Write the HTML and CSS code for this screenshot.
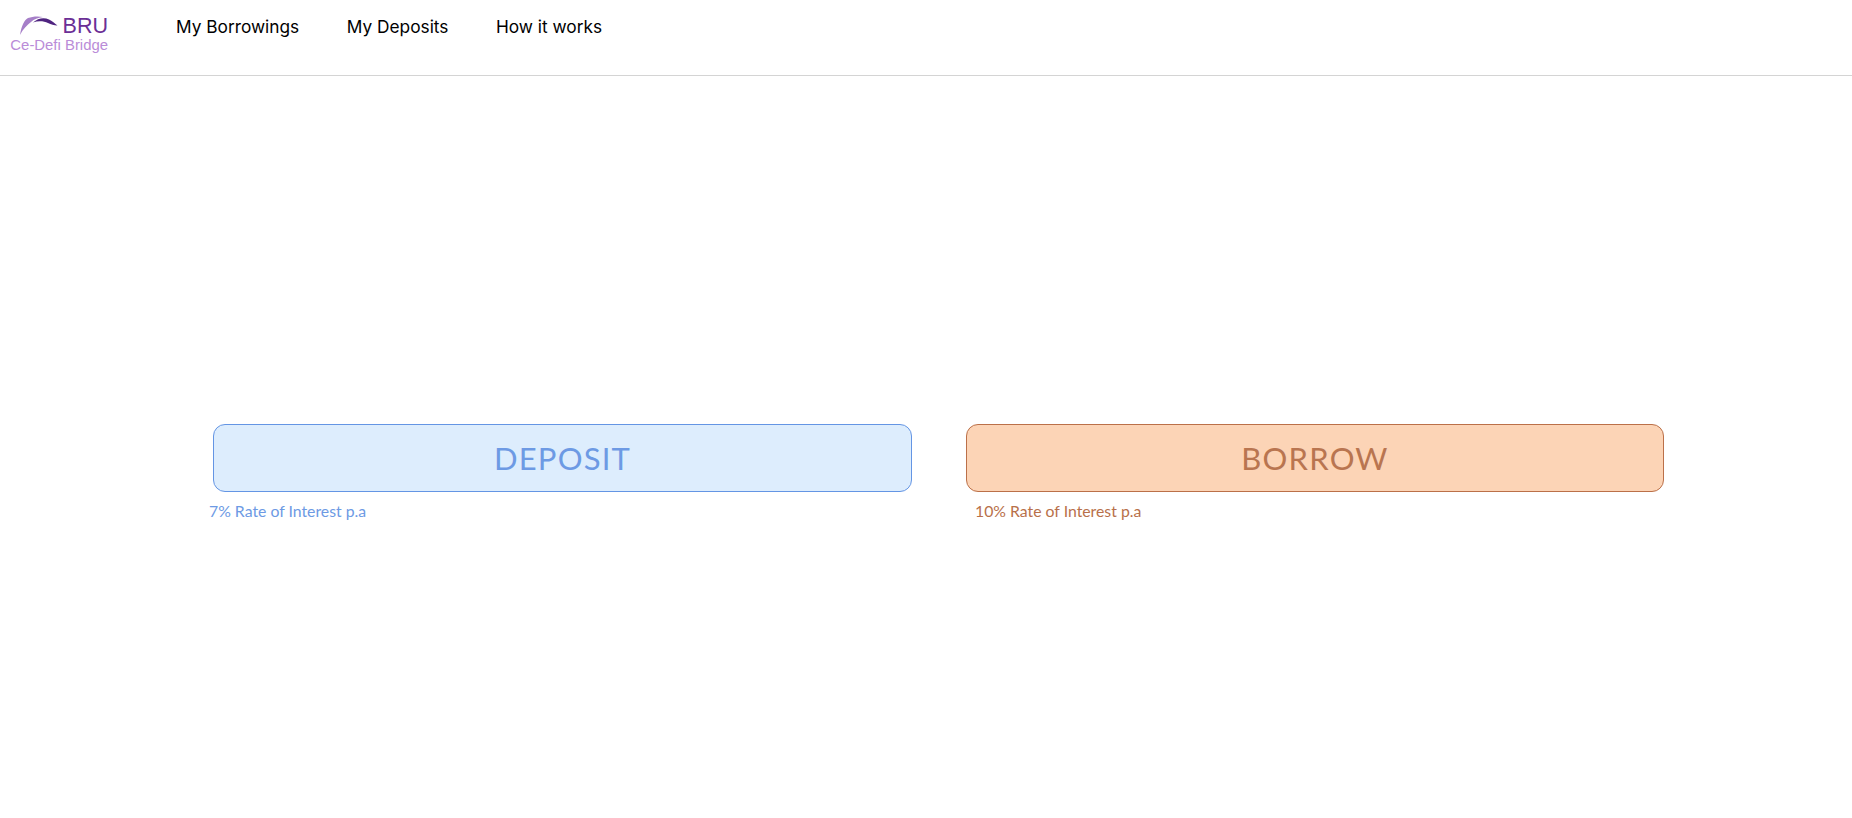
FILE: index.html
```html
<!DOCTYPE html>
<html lang="en">
<head>
<meta charset="utf-8">
<title>BRU Ce-Defi Bridge</title>
<link rel="stylesheet" href="styles.css">
</head>
<body>
<header class="topbar">
  <a class="logo" href="#">
    <span class="logo-top">
      <svg class="logo-mark" viewBox="0 0 38 20" width="38" height="20" aria-hidden="true">
        <path d="M0 20C1.5 11 4 5 8 3C12 1.5 18 1 23 2C18 2.8 14 4 11 7C7 10 3 14 0 20Z" fill="#a67fc8"/>
        <path d="M13 7.5C18 3 24 2 29 4.5C32 6 35 8.5 37.5 10.5C34 10.5 31 9.5 28 8C24 6 18 5.5 13 7.5Z" fill="#4f2480"/>
      </svg>
      <span class="logo-name">BRU</span>
    </span>
    <span class="logo-tag">Ce-Defi Bridge</span>
  </a>
  <nav class="nav">
    <a href="#">My Borrowings</a>
    <a href="#">My Deposits</a>
    <a href="#">How it works</a>
  </nav>
</header>
<main class="actions">
  <section class="action action-deposit">
    <button class="action-btn" type="button">DEPOSIT</button>
    <p class="action-rate">7% Rate of Interest p.a</p>
  </section>
  <section class="action action-borrow">
    <button class="action-btn" type="button">BORROW</button>
    <p class="action-rate">10% Rate of Interest p.a</p>
  </section>
</main>
</body>
</html>
```
FILE: styles.css
```css
* { box-sizing: border-box; }
html, body { height: 100%; }
body {
  margin: 0;
  background: #fff;
  font-family: "Lato", sans-serif;
  overflow: hidden;
}
.topbar {
  display: flex;
  align-items: flex-start;
  height: 76px;
  padding: 14px 0 0 10px;
  border-bottom: 1px solid #d4d4d4;
}
.logo {
  display: flex;
  flex-direction: column;
  align-items: flex-end;
  width: 98px;
  text-decoration: none;
  font-family: "Liberation Sans", Arial, sans-serif;
}
.logo-top {
  display: flex;
  align-items: flex-start;
  gap: 5px;
  height: 22px;
}
.logo-mark { margin-top: 1px; }
.logo-name {
  font-size: 21.5px;
  line-height: 24px;
  color: #6b2f96;
}
.logo-tag {
  font-size: 14.9px;
  line-height: 18px;
  color: #ba8cd8;
  white-space: nowrap;
}
.nav {
  display: flex;
  gap: 47.5px;
  margin-left: 68px;
  padding-top: 1px;
}
.nav a {
  font-family: "Inter", "Open Sans", sans-serif;
  font-size: 17.3px;
  line-height: 24px;
  color: #000;
  text-decoration: none;
  white-space: nowrap;
}
.actions {
  display: flex;
  gap: 54px;
  padding: 348px 0 0 213px;
}
.action { width: 699px; }
.action-borrow { width: 698px; }
.action-btn {
  display: block;
  width: 100%;
  height: 68px;
  padding: 0;
  border: 1px solid;
  border-radius: 12px;
  font-family: "Lato", sans-serif;
  font-size: 31px;
  letter-spacing: 1.2px;
  cursor: pointer;
}
.action-rate {
  margin: 9px 0 0;
  font-size: 15.8px;
  line-height: 20px;
}
.action-deposit .action-btn {
  background: #ddedfd;
  border-color: #6495e4;
  color: #6d9ae4;
}
.action-deposit .action-rate {
  color: #6d9ae4;
  margin-left: -4px;
}
.action-borrow .action-btn {
  background: #fcd4b6;
  border-color: #bb7049;
  color: #b97550;
}
.action-borrow .action-rate {
  color: #b8704a;
  margin-left: 9px;
}
```
